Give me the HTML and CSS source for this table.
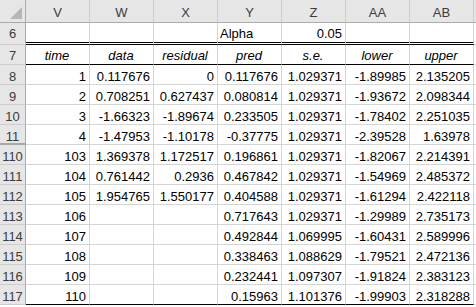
FILE: index.html
```html
<!DOCTYPE html>
<html>
<head>
<meta charset="utf-8">
<link rel="stylesheet" href="styles.css">
</head>
<body>
<div class="sheet">
  <div class="row head">
    <div class="c corner"><svg width="25" height="22" viewBox="0 0 25 22"><polygon points="22,7 22,19 10,19" fill="#b6b6b6"/></svg></div>
    <div class="c ch">V</div><div class="c ch">W</div><div class="c ch">X</div><div class="c ch">Y</div><div class="c ch">Z</div><div class="c ch">AA</div><div class="c ch">AB</div><div class="c ch last"></div>
  </div>
  <div class="row r6">
    <div class="c rh">6</div>
    <div class="c d dbl"></div><div class="c d dbl"></div><div class="c d dbl"></div><div class="c d dbl left">Alpha</div><div class="c d dbl">0.05</div><div class="c d dbl"></div><div class="c d dbl"></div><div class="c d x"></div>
  </div>
  <div class="row r7">
    <div class="c rh">7</div>
    <div class="c d it">time</div><div class="c d it">data</div><div class="c d it">residual</div><div class="c d it">pred</div><div class="c d it">s.e.</div><div class="c d it">lower</div><div class="c d it">upper</div><div class="c d x"></div>
  </div>
  <div class="row">
    <div class="c rh">8</div>
    <div class="c d">1</div><div class="c d">0.117676</div><div class="c d">0</div><div class="c d">0.117676</div><div class="c d">1.029371</div><div class="c d">-1.89985</div><div class="c d">2.135205</div><div class="c d x"></div>
  </div>
  <div class="row">
    <div class="c rh">9</div>
    <div class="c d">2</div><div class="c d">0.708251</div><div class="c d">0.627437</div><div class="c d">0.080814</div><div class="c d">1.029371</div><div class="c d">-1.93672</div><div class="c d">2.098344</div><div class="c d x"></div>
  </div>
  <div class="row">
    <div class="c rh">10</div>
    <div class="c d">3</div><div class="c d">-1.66323</div><div class="c d">-1.89674</div><div class="c d">0.233505</div><div class="c d">1.029371</div><div class="c d">-1.78402</div><div class="c d">2.251035</div><div class="c d x"></div>
  </div>
  <div class="row">
    <div class="c rh hid">11</div>
    <div class="c d">4</div><div class="c d">-1.47953</div><div class="c d">-1.10178</div><div class="c d">-0.37775</div><div class="c d">1.029371</div><div class="c d">-2.39528</div><div class="c d">1.63978</div><div class="c d x"></div>
  </div>
  <div class="row">
    <div class="c rh">110</div>
    <div class="c d">103</div><div class="c d">1.369378</div><div class="c d">1.172517</div><div class="c d">0.196861</div><div class="c d">1.029371</div><div class="c d">-1.82067</div><div class="c d">2.214391</div><div class="c d x"></div>
  </div>
  <div class="row">
    <div class="c rh">111</div>
    <div class="c d">104</div><div class="c d">0.761442</div><div class="c d">0.2936</div><div class="c d">0.467842</div><div class="c d">1.029371</div><div class="c d">-1.54969</div><div class="c d">2.485372</div><div class="c d x"></div>
  </div>
  <div class="row">
    <div class="c rh">112</div>
    <div class="c d">105</div><div class="c d">1.954765</div><div class="c d">1.550177</div><div class="c d">0.404588</div><div class="c d">1.029371</div><div class="c d">-1.61294</div><div class="c d">2.422118</div><div class="c d x"></div>
  </div>
  <div class="row">
    <div class="c rh">113</div>
    <div class="c d">106</div><div class="c d"></div><div class="c d"></div><div class="c d">0.717643</div><div class="c d">1.029371</div><div class="c d">-1.29989</div><div class="c d">2.735173</div><div class="c d x"></div>
  </div>
  <div class="row">
    <div class="c rh">114</div>
    <div class="c d">107</div><div class="c d"></div><div class="c d"></div><div class="c d">0.492844</div><div class="c d">1.069995</div><div class="c d">-1.60431</div><div class="c d">2.589996</div><div class="c d x"></div>
  </div>
  <div class="row">
    <div class="c rh">115</div>
    <div class="c d">108</div><div class="c d"></div><div class="c d"></div><div class="c d">0.338463</div><div class="c d">1.088629</div><div class="c d">-1.79521</div><div class="c d">2.472136</div><div class="c d x"></div>
  </div>
  <div class="row">
    <div class="c rh">116</div>
    <div class="c d">109</div><div class="c d"></div><div class="c d"></div><div class="c d">0.232441</div><div class="c d">1.097307</div><div class="c d">-1.91824</div><div class="c d">2.383123</div><div class="c d x"></div>
  </div>
  <div class="row r117">
    <div class="c rh">117</div>
    <div class="c d">110</div><div class="c d"></div><div class="c d"></div><div class="c d">0.15963</div><div class="c d">1.101376</div><div class="c d">-1.99903</div><div class="c d">2.318288</div><div class="c d x"></div>
  </div>
</div>
</body>
</html>
```
FILE: styles.css
```css
html, body {
  margin: 0;
  padding: 0;
  background: #ffffff;
}
body {
  font-family: "Liberation Sans", Arial, sans-serif;
  font-size: 13px;
  color: #000000;
}
.sheet {
  width: 476px;
  height: 307px;
  overflow: hidden;
}
.row {
  display: grid;
  grid-template-columns: 26px repeat(7, 64px) 1fr;
  height: 20px;
}
.row.head { height: 23px; }
.row.r6 { height: 22px; }
.c {
  box-sizing: border-box;
  border-right: 1px solid #d4d4d4;
  border-bottom: 1px solid #d4d4d4;
  white-space: nowrap;
  overflow: hidden;
}
.d {
  text-align: right;
  padding: 1px 3px 0 2px;
  line-height: 21px;
}
.corner {
  background: #e6e6e6;
  border-right: 1px solid #ababab;
  border-bottom: 1px solid #ababab;
}
.corner svg { display: block; }
.ch {
  background: #e6e6e6;
  color: #3c3c3c;
  text-align: center;
  line-height: 23px;
  padding-top: 1px;
  border-right: 1px solid #cdcdcd;
  border-bottom: 1px solid #ababab;
}
.ch.last { border-right: none; }
.rh {
  background: #e6e6e6;
  color: #3c3c3c;
  text-align: center;
  line-height: 21px;
  padding-top: 1px;
  border-right: 1px solid #ababab;
  border-bottom: 1px solid #cdcdcd;
}
.r6 .rh, .r6 .d { line-height: 21px; padding-top: 0; }
.r7 .rh, .r7 .d { line-height: 21px; padding-top: 0; }
.rh.hid {
  border-bottom: 2px solid #a8a8a8;
}
.dbl { border-bottom: 3px double #000000; }
.left { text-align: left; padding-left: 2px; }
.it { font-style: italic; text-align: center; }
.r7 .d { border-bottom: 1px solid #000000; }
.r117 .d { border-bottom: 1px solid #000000; }
.d.x { border-right: none; }
.r7 .d.x, .r117 .d.x { border-bottom: 1px solid #d4d4d4; }
```
